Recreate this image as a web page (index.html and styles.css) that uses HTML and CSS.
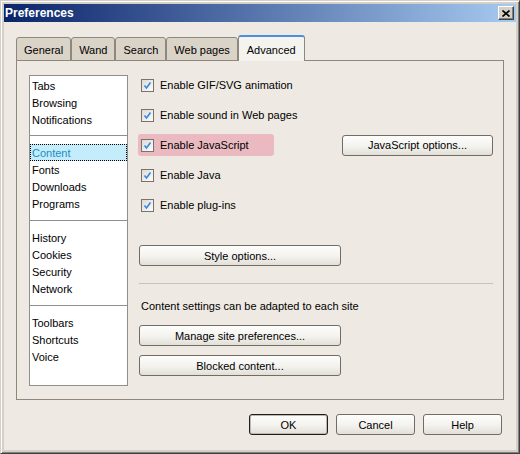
FILE: index.html
```html
<!DOCTYPE html>
<html lang="en">
<head>
    <meta charset="UTF-8">
    <title>Preferences</title>
    <link rel="stylesheet" href="styles.css">
</head>
<body>
    <div class="window">
        <div class="titlebar">
            <span class="title">Preferences</span>
            <button class="close" aria-label="Close">
                <svg width="8" height="7" viewBox="0 0 8 7"><path d="M0.5 0.5 L7.5 6.5 M7.5 0.5 L0.5 6.5" stroke="#000" stroke-width="1.6" fill="none"/></svg>
            </button>
        </div>
        <div class="body">
            <div class="tabs">
                <div class="tab">General</div>
                <div class="tab">Wand</div>
                <div class="tab">Search</div>
                <div class="tab">Web pages</div>
                <div class="tab active">Advanced</div>
            </div>
            <div class="panel">
                <div class="sections">
                    <ul class="group">
                        <li>Tabs</li>
                        <li>Browsing</li>
                        <li>Notifications</li>
                    </ul>
                    <ul class="group">
                        <li class="selected">Content</li>
                        <li>Fonts</li>
                        <li>Downloads</li>
                        <li>Programs</li>
                    </ul>
                    <ul class="group">
                        <li>History</li>
                        <li>Cookies</li>
                        <li>Security</li>
                        <li>Network</li>
                    </ul>
                    <ul class="group">
                        <li>Toolbars</li>
                        <li>Shortcuts</li>
                        <li>Voice</li>
                    </ul>
                </div>
                <div class="options">
                    <div class="row">
                        <label class="check"><span class="box"><svg width="11" height="11" viewBox="0 0 11 11"><path d="M2.5 5.5 L4.5 8 L8.5 2.5" stroke="#3a86e4" stroke-width="1.6" fill="none"/></svg></span>Enable GIF/SVG animation</label>
                    </div>
                    <div class="row">
                        <label class="check"><span class="box"><svg width="11" height="11" viewBox="0 0 11 11"><path d="M2.5 5.5 L4.5 8 L8.5 2.5" stroke="#3a86e4" stroke-width="1.6" fill="none"/></svg></span>Enable sound in Web pages</label>
                    </div>
                    <div class="row">
                        <label class="check highlight"><span class="box"><svg width="11" height="11" viewBox="0 0 11 11"><path d="M2.5 5.5 L4.5 8 L8.5 2.5" stroke="#3a86e4" stroke-width="1.6" fill="none"/></svg></span>Enable JavaScript</label>
                        <button class="btn js-btn">JavaScript options...</button>
                    </div>
                    <div class="row">
                        <label class="check"><span class="box"><svg width="11" height="11" viewBox="0 0 11 11"><path d="M2.5 5.5 L4.5 8 L8.5 2.5" stroke="#3a86e4" stroke-width="1.6" fill="none"/></svg></span>Enable Java</label>
                    </div>
                    <div class="row">
                        <label class="check"><span class="box"><svg width="11" height="11" viewBox="0 0 11 11"><path d="M2.5 5.5 L4.5 8 L8.5 2.5" stroke="#3a86e4" stroke-width="1.6" fill="none"/></svg></span>Enable plug-ins</label>
                    </div>
                    <button class="btn wide style-btn">Style options...</button>
                    <div class="separator"></div>
                    <p class="note">Content settings can be adapted to each site</p>
                    <button class="btn wide manage-btn">Manage site preferences...</button>
                    <button class="btn wide blocked-btn">Blocked content...</button>
                </div>
            </div>
            <div class="actions">
                <button class="btn action default">OK</button>
                <button class="btn action">Cancel</button>
                <button class="btn action">Help</button>
            </div>
        </div>
    </div>
</body>
</html>
```

FILE: styles.css
```css
body {
    margin: 0;
    font-family: "Liberation Sans", Arial, sans-serif;
    font-size: 11px;
    color: #000;
}

.window {
    width: 520px;
    height: 454px;
    box-sizing: border-box;
    border: 1px solid;
    border-color: #d4d0c8 #404040 #404040 #d4d0c8;
    box-shadow: inset 1px 1px #fff, inset -1px -1px #808080;
    padding: 3px;
    background: #d4d0c8;
    display: flex;
    flex-direction: column;
}

.titlebar {
    height: 18px;
    flex: none;
    background: linear-gradient(to right, #0a246a, #a6caf0);
    display: flex;
    align-items: center;
    justify-content: space-between;
    padding-left: 1px;
}

.title {
    color: #fff;
    font-weight: bold;
    font-size: 12px;
}

.close {
    width: 16px;
    height: 14px;
    box-sizing: border-box;
    padding: 0;
    margin-right: 2px;
    background: #d4d0c8;
    border: 1px solid;
    border-color: #fff #404040 #404040 #fff;
    box-shadow: inset -1px -1px #808080;
    display: flex;
    align-items: center;
    justify-content: center;
}

.close svg {
    display: block;
}

.body {
    flex: 1;
    background: #eeeae3;
    padding: 13px 0 0 12px;
}

/* tabs */
.tabs {
    display: flex;
    align-items: flex-end;
    height: 26px;
}

.tab {
    height: 24px;
    box-sizing: border-box;
    padding: 2px 7px 0;
    line-height: 20px;
    background: #d9d3c8;
    border: 1px solid #8e887c;
    border-radius: 3px 3px 0 0;
    white-space: nowrap;
}

.tab.active {
    position: relative;
    z-index: 1;
    height: 26px;
    line-height: 22px;
    padding: 2px 8px 0;
    background: #f4f3ee;
    border-top: 2px solid #4d8edc;
    border-bottom: none;
}

.panel {
    width: 488px;
    height: 340px;
    box-sizing: border-box;
    margin-top: -1px;
    border: 1px solid #8e887c;
    padding: 14px 0 0 12px;
    display: flex;
    align-items: flex-start;
}

/* section list */
.sections {
    width: 99px;
    height: 311px;
    box-sizing: border-box;
    border: 1px solid #8f8f8f;
    background: #fff;
}

.group {
    list-style: none;
    margin: 0;
    padding: 8px 0;
    border-top: 1px solid #8f8f8f;
}

.group:first-child {
    padding: 1px 0 7px;
    border-top: none;
}

.group li {
    height: 17px;
    box-sizing: border-box;
    padding: 2px 0 0 1px;
    line-height: 13px;
    border: 1px solid transparent;
}

.group li.selected {
    background: #c4ecfb;
    color: #1a8fc6;
    border: 1px dotted #000;
}

/* options */
.options {
    width: 355px;
    margin: -1px 0 0 10px;
    display: flex;
    flex-direction: column;
    align-items: flex-start;
}

.row {
    width: 100%;
    height: 22px;
    margin-bottom: 8px;
    display: flex;
    align-items: center;
    justify-content: space-between;
}

.row:nth-child(5) {
    margin-bottom: 0;
}

.check {
    height: 22px;
    box-sizing: border-box;
    padding: 0 3px;
    display: inline-flex;
    align-items: center;
    border-radius: 3px;
}

.check.highlight {
    width: 136px;
    background: #ebbac0;
}

.box {
    width: 13px;
    height: 13px;
    box-sizing: border-box;
    margin-right: 6px;
    border: 1px solid #77736b;
    background: linear-gradient(135deg, #dddad3, #fcfcfb);
    display: flex;
    align-items: center;
    justify-content: center;
}

.box svg {
    display: block;
}

.btn {
    height: 21px;
    box-sizing: border-box;
    padding: 0;
    font: inherit;
    color: #000;
    border: 1px solid #716d65;
    border-radius: 3px;
    background: linear-gradient(#fdfdfc, #f3f2ee 55%, #e2dfd7);
}

.js-btn {
    width: 151px;
}

.wide {
    width: 202px;
    margin-left: 1px;
}

.style-btn {
    margin-top: 29px;
}

.separator {
    width: 354px;
    height: 1px;
    margin: 17px 0 0 1px;
    background: #c6c2b8;
}

.note {
    margin: 15px 0 0 3px;
    line-height: 14px;
}

.manage-btn {
    margin-top: 12px;
}

.blocked-btn {
    margin-top: 9px;
}

.actions {
    display: flex;
    justify-content: flex-end;
    gap: 8px;
    margin: 14px 14px 0 0;
}

.action {
    width: 79px;
}

.action.default {
    border-color: #1e1e1e;
    box-shadow: inset 0 0 0 1px #bdb9b0;
}
```
